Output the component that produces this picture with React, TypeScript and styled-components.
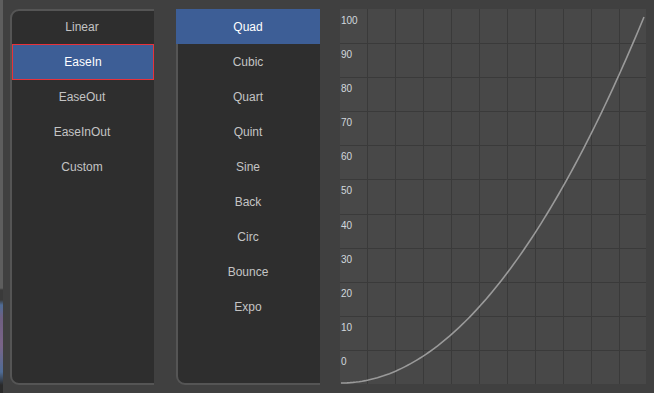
import React from "react";
import styled, { createGlobalStyle } from "styled-components";

const Global = createGlobalStyle`
  html, body { margin: 0; padding: 0; background: #404040; }
  body { font-family: "Liberation Sans", Arial, sans-serif; overflow: hidden; }
`;

const Page = styled.div`
  width: 654px;
  height: 393px;
  display: flex;
  align-items: flex-start;
  background: #404040;
  box-sizing: border-box;
  overflow: hidden;
`;

const BackStrip = styled.div`
  width: 3px;
  height: 393px;
  flex: none;
  background: linear-gradient(
    to bottom,
    #5e5e5e 0px,
    #5e5e5e 288px,
    #3a3a3a 290px,
    #3a3a3a 300px,
    #4f6c96 305px,
    #6f5f82 318px,
    #7a6488 345px,
    #4f6c96 372px,
    #2a2a2a 385px
  );
`;

const Panel = styled.div<{ $ml: number }>`
  margin-left: ${(p) => p.$ml}px;
  margin-top: 9px;
  width: 144px;
  height: 376px;
  flex: none;
  overflow: hidden;
  position: relative;
`;

const PanelFrame = styled.div`
  width: 170px;
  height: 376px;
  box-sizing: border-box;
  background: #2e2e2e;
  border: 2px solid #555555;
  border-radius: 9px;
`;

const List = styled.ul`
  list-style: none;
  margin: 0;
  padding: 0;
  position: absolute;
  top: 0;
  left: 0;
  width: 144px;
`;

const Item = styled.li<{ $active?: boolean; $outlined?: boolean }>`
  height: 35px;
  display: flex;
  align-items: center;
  justify-content: center;
  font-size: 12px;
  color: ${(p) => (p.$active ? "#ffffff" : "#c4c4c4")};
  background: ${(p) => (p.$active ? "#3d5e96" : "transparent")};
  box-sizing: border-box;
  border: ${(p) => (p.$outlined ? "1px solid #e8323a" : "none")};
  ${(p) => (p.$outlined ? "height: 36px; margin-bottom: -1px;" : "")}
  ${(p) => (p.$outlined ? "margin-left: 2px;" : "")}
`;

const ChartBox = styled.div`
  margin-left: 20px;
  margin-top: 9px;
  width: 306px;
  height: 375px;
  flex: none;
  background: #484848;
`;

const W = 306;
const H = 375;
const rowH = H / 11;

function Chart() {
  const vLines: number[] = [];
  for (let i = 1; i <= 10; i++) vLines.push(28 * i);
  const hLines: number[] = [];
  for (let i = 1; i <= 10; i++) hLines.push(rowH * i);
  const labels = [100, 90, 80, 70, 60, 50, 40, 30, 20, 10, 0];

  const x0 = 1;
  const x1 = 304;
  const y0 = 374;
  const y1 = 8;
  const pts: string[] = [];
  for (let i = 0; i <= 100; i++) {
    const t = i / 100;
    const v = t * t;
    const x = x0 + (x1 - x0) * t;
    const y = y0 - (y0 - y1) * v;
    pts.push(`${x.toFixed(2)},${y.toFixed(2)}`);
  }

  return (
    <svg width={W} height={H} viewBox={`0 0 ${W} ${H}`} style={{ display: "block" }}>
      {vLines.map((x) => (
        <line key={"v" + x} x1={x - 0.5} x2={x - 0.5} y1={0} y2={H} stroke="#3a3a3a" strokeWidth={1} />
      ))}
      {hLines.map((y) => (
        <line key={"h" + y} x1={0} x2={W} y1={Math.round(y) + 0.5} y2={Math.round(y) + 0.5} stroke="#3a3a3a" strokeWidth={1} />
      ))}
      {labels.map((l, i) => (
        <text
          key={l}
          x={1}
          y={15 + rowH * i}
          fontSize={10}
          fill="#d2d8de"
          fontFamily='"Liberation Sans", Arial, sans-serif'
        >
          {l}
        </text>
      ))}
      <polyline points={pts.join(" ")} fill="none" stroke="#9a9a9a" strokeWidth={1.6} />
    </svg>
  );
}

const leftItems = ["Linear", "EaseIn", "EaseOut", "EaseInOut", "Custom"];
const midItems = ["Quad", "Cubic", "Quart", "Quint", "Sine", "Back", "Circ", "Bounce", "Expo"];

export default function App() {
  return (
    <>
      <Global />
      <Page>
        <BackStrip />
        <Panel $ml={7}>
          <PanelFrame />
          <List>
            {leftItems.map((it) => (
              <Item key={it} $active={it === "EaseIn"} $outlined={it === "EaseIn"}>
                {it}
              </Item>
            ))}
          </List>
        </Panel>
        <Panel $ml={22}>
          <PanelFrame />
          <List>
            {midItems.map((it) => (
              <Item key={it} $active={it === "Quad"}>
                {it}
              </Item>
            ))}
          </List>
        </Panel>
        <ChartBox>
          <Chart />
        </ChartBox>
      </Page>
    </>
  );
}
